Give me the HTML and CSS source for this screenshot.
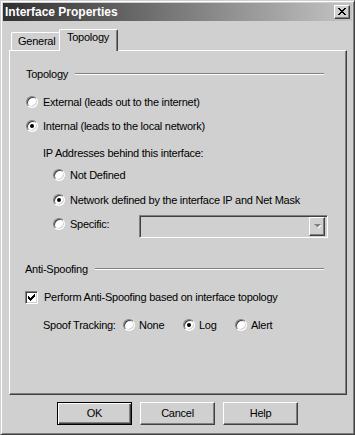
FILE: index.html
```html
<!DOCTYPE html>
<html>
<head>
<meta charset="utf-8">
<link rel="stylesheet" href="styles.css">
</head>
<body>
<div class="window">
  <div class="titlebar">
    <span class="title">Interface Properties</span>
    <span class="close"><svg width="8" height="7" viewBox="0 0 8 7" shape-rendering="crispEdges"><path d="M0 0h2v1h-2zM1 1h2v1h-2zM2 2h4v1h-4zM3 3h2v1h-2zM2 4h4v1h-4zM1 5h2v1h-2zM0 6h2v1h-2zM6 0h2v1h-2zM5 1h2v1h-2zM5 5h2v1h-2zM6 6h2v1h-2z" fill="#000"/></svg></span>
  </div>
  <div class="tabs">
    <div class="tab">General</div>
    <div class="tab active">Topology</div>
  </div>
  <div class="panel">
    <div class="group-head r-topo"><span>Topology</span><span class="etch"></span></div>
    <div class="opt r-ext"><span class="radio"></span>External (leads out to the internet)</div>
    <div class="opt r-int"><span class="radio checked"></span>Internal (leads to the local network)</div>
    <div class="opt r-ip">IP Addresses behind this interface:</div>
    <div class="opt sub r-nd"><span class="radio"></span>Not Defined</div>
    <div class="opt sub r-net"><span class="radio checked"></span>Network defined by the interface IP and Net Mask</div>
    <div class="opt sub r-spec"><span class="radio"></span><span class="spec-label">Specific:</span>
      <span class="combo"><span class="drop"><svg width="7" height="5" viewBox="0 0 7 5"><path d="M1 1h7l-3.5 3.5z" fill="#fff"/><path d="M0 0h7l-3.5 3.5z" fill="#808080"/></svg></span></span>
    </div>
    <div class="group-head r-anti"><span>Anti-Spoofing</span><span class="etch"></span></div>
    <div class="opt r-chk"><span class="check"><svg width="7" height="7" viewBox="0 0 7 7" shape-rendering="crispEdges"><path d="M6 0h1v1h-1zM5 1h2v1h-2zM0 2h1v1h-1zM4 2h3v1h-3zM0 3h2v1h-2zM3 3h3v1h-3zM0 4h5v1h-5zM1 5h3v1h-3zM2 6h1v1h-1z" fill="#000"/></svg></span>Perform Anti-Spoofing based on interface topology</div>
    <div class="opt r-spoof"><span class="spoof-label">Spoof Tracking:</span>
      <span class="choice c-none"><span class="radio sm"></span>None</span>
      <span class="choice c-log"><span class="radio sm checked"></span>Log</span>
      <span class="choice"><span class="radio sm"></span>Alert</span>
    </div>
  </div>
  <div class="buttons">
    <div class="btn default">OK</div>
    <div class="btn">Cancel</div>
    <div class="btn">Help</div>
  </div>
</div>
</body>
</html>
```
FILE: styles.css
```css
* { box-sizing: border-box; }
html, body { margin: 0; padding: 0; }
body {
  width: 355px; height: 435px;
  background: #d0d0d0;
  font-family: "Liberation Sans", Arial, sans-serif;
  font-size: 11px;
  letter-spacing: -0.25px;
  color: #000;
}
.window {
  width: 355px; height: 435px;
  background: #d0d0d0;
  border: 1px solid;
  border-color: #d0d0d0 #404040 #404040 #d0d0d0;
  box-shadow: inset 1px 1px #fff, inset -1px -1px #808080;
  padding: 2px;
  display: flex; flex-direction: column;
}
.titlebar {
  height: 18px;
  background: linear-gradient(to right, #303030, #c4c4c4);
  display: flex; align-items: center; justify-content: space-between;
  padding: 0 2px 0 2px;
}
.title { color: #fff; font-weight: bold; font-size: 12px; letter-spacing: 0; }
.close {
  width: 16px; height: 14px;
  background: #d0d0d0;
  border: 1px solid;
  border-color: #fff #404040 #404040 #fff;
  box-shadow: inset -1px -1px #808080;
  display: flex; align-items: center; justify-content: center;
  padding-right: 1px; padding-bottom: 1px;
}
.close svg { display: block; }
.tabs {
  display: flex; align-items: flex-end;
  height: 21px;
  margin: 8px 5px 0 8px;
}
.tab {
  width: 48px; height: 18px;
  border-top: 1px solid #fff; border-left: 1px solid #fff;
  border-top-left-radius: 2px;
  padding: 2px 0 0 6px;
  line-height: 13px;
}
.tab.active {
  width: 59px; height: 22px;
  margin-bottom: -1px;
  position: relative; z-index: 1;
  background: #d0d0d0;
  border-right: 1px solid #404040;
  border-top-right-radius: 2px;
  box-shadow: inset -1px 0 #808080;
  padding: 1px 0 0 7px;
}
.panel {
  margin: 0 5px 0 6px;
  height: 345px;
  border: 1px solid;
  border-color: #fff #404040 #404040 #fff;
  box-shadow: inset -1px -1px #808080;
  padding: 15px 0 0 16px;
  display: flex; flex-direction: column;
}
.group-head {
  height: 16px;
  display: flex; align-items: center;
  margin-right: 22px;
}
.etch {
  flex: 1;
  height: 2px;
  margin-left: 7px;
  border-top: 1px solid #808080;
  border-bottom: 1px solid #fff;
}
.opt {
  height: 16px;
  display: flex; align-items: center;
  white-space: nowrap;
}
.radio {
  width: 12px; height: 12px;
  border-radius: 50%;
  background: #fff;
  border: 1px solid;
  border-color: #808080 #fff #fff #808080;
  box-shadow: inset 1px 1px #404040, inset -1px -1px #d0d0d0;
  margin-right: 5px;
  position: relative;
  flex: none;
}
.radio.checked::after {
  content: "";
  position: absolute;
  left: 3px; top: 3px;
  width: 4px; height: 4px;
  border-radius: 50%;
  background: #000;
}
.radio.sm { margin-right: 4px; }
.r-topo { margin-top: 0; }
.r-ext { margin-top: 12px; }
.r-int { margin-top: 8px; }
.r-ip { margin-top: 11px; margin-left: 17px; }
.sub { margin-left: 27px; }
.r-nd { margin-top: 6px; }
.r-net { margin-top: 9px; }
.r-spec { margin-top: 8px; align-items: center; }
.spec-label { width: 69px; }
.combo {
  width: 189px; height: 23px;
  margin-top: 5px;
  border: 1px solid;
  border-color: #808080 #fff #fff #808080;
  box-shadow: inset 1px 1px #404040, inset -1px -1px #d0d0d0;
  background: #d0d0d0;
  display: flex; justify-content: flex-end; align-items: center;
  padding: 2px;
  flex: none;
}
.drop {
  width: 16px; height: 19px;
  border: 1px solid;
  border-color: #fff #404040 #404040 #fff;
  box-shadow: inset -1px -1px #808080;
  display: flex; align-items: center; justify-content: center;
}
.drop svg { display: block; }
.r-anti { margin-top: 29px; margin-left: -1px; }
.r-chk { margin-top: 12px; margin-left: -1px; }
.check {
  width: 13px; height: 13px;
  background: #fff;
  border: 1px solid;
  border-color: #808080 #fff #fff #808080;
  box-shadow: inset 1px 1px #404040, inset -1px -1px #d0d0d0;
  margin-right: 6px;
  display: flex; align-items: center; justify-content: center;
  flex: none;
}
.check svg { display: block; }
.r-spoof { margin-top: 12px; margin-left: 17px; }
.spoof-label { width: 80px; }
.choice { display: flex; align-items: center; }
.c-none { width: 60px; }
.c-log { width: 52px; }
.buttons {
  margin-top: 7px;
  display: flex; justify-content: center; gap: 8px;
}
.btn {
  width: 75px; height: 23px;
  background: #d0d0d0;
  border: 1px solid;
  border-color: #fff #404040 #404040 #fff;
  box-shadow: inset -1px -1px #808080;
  display: flex; align-items: center; justify-content: center;
  padding-bottom: 1px;
}
.btn.default {
  border-color: #000;
  box-shadow: inset 1px 1px #fff, inset -1px -1px #404040, inset -2px -2px #808080;
}
```
